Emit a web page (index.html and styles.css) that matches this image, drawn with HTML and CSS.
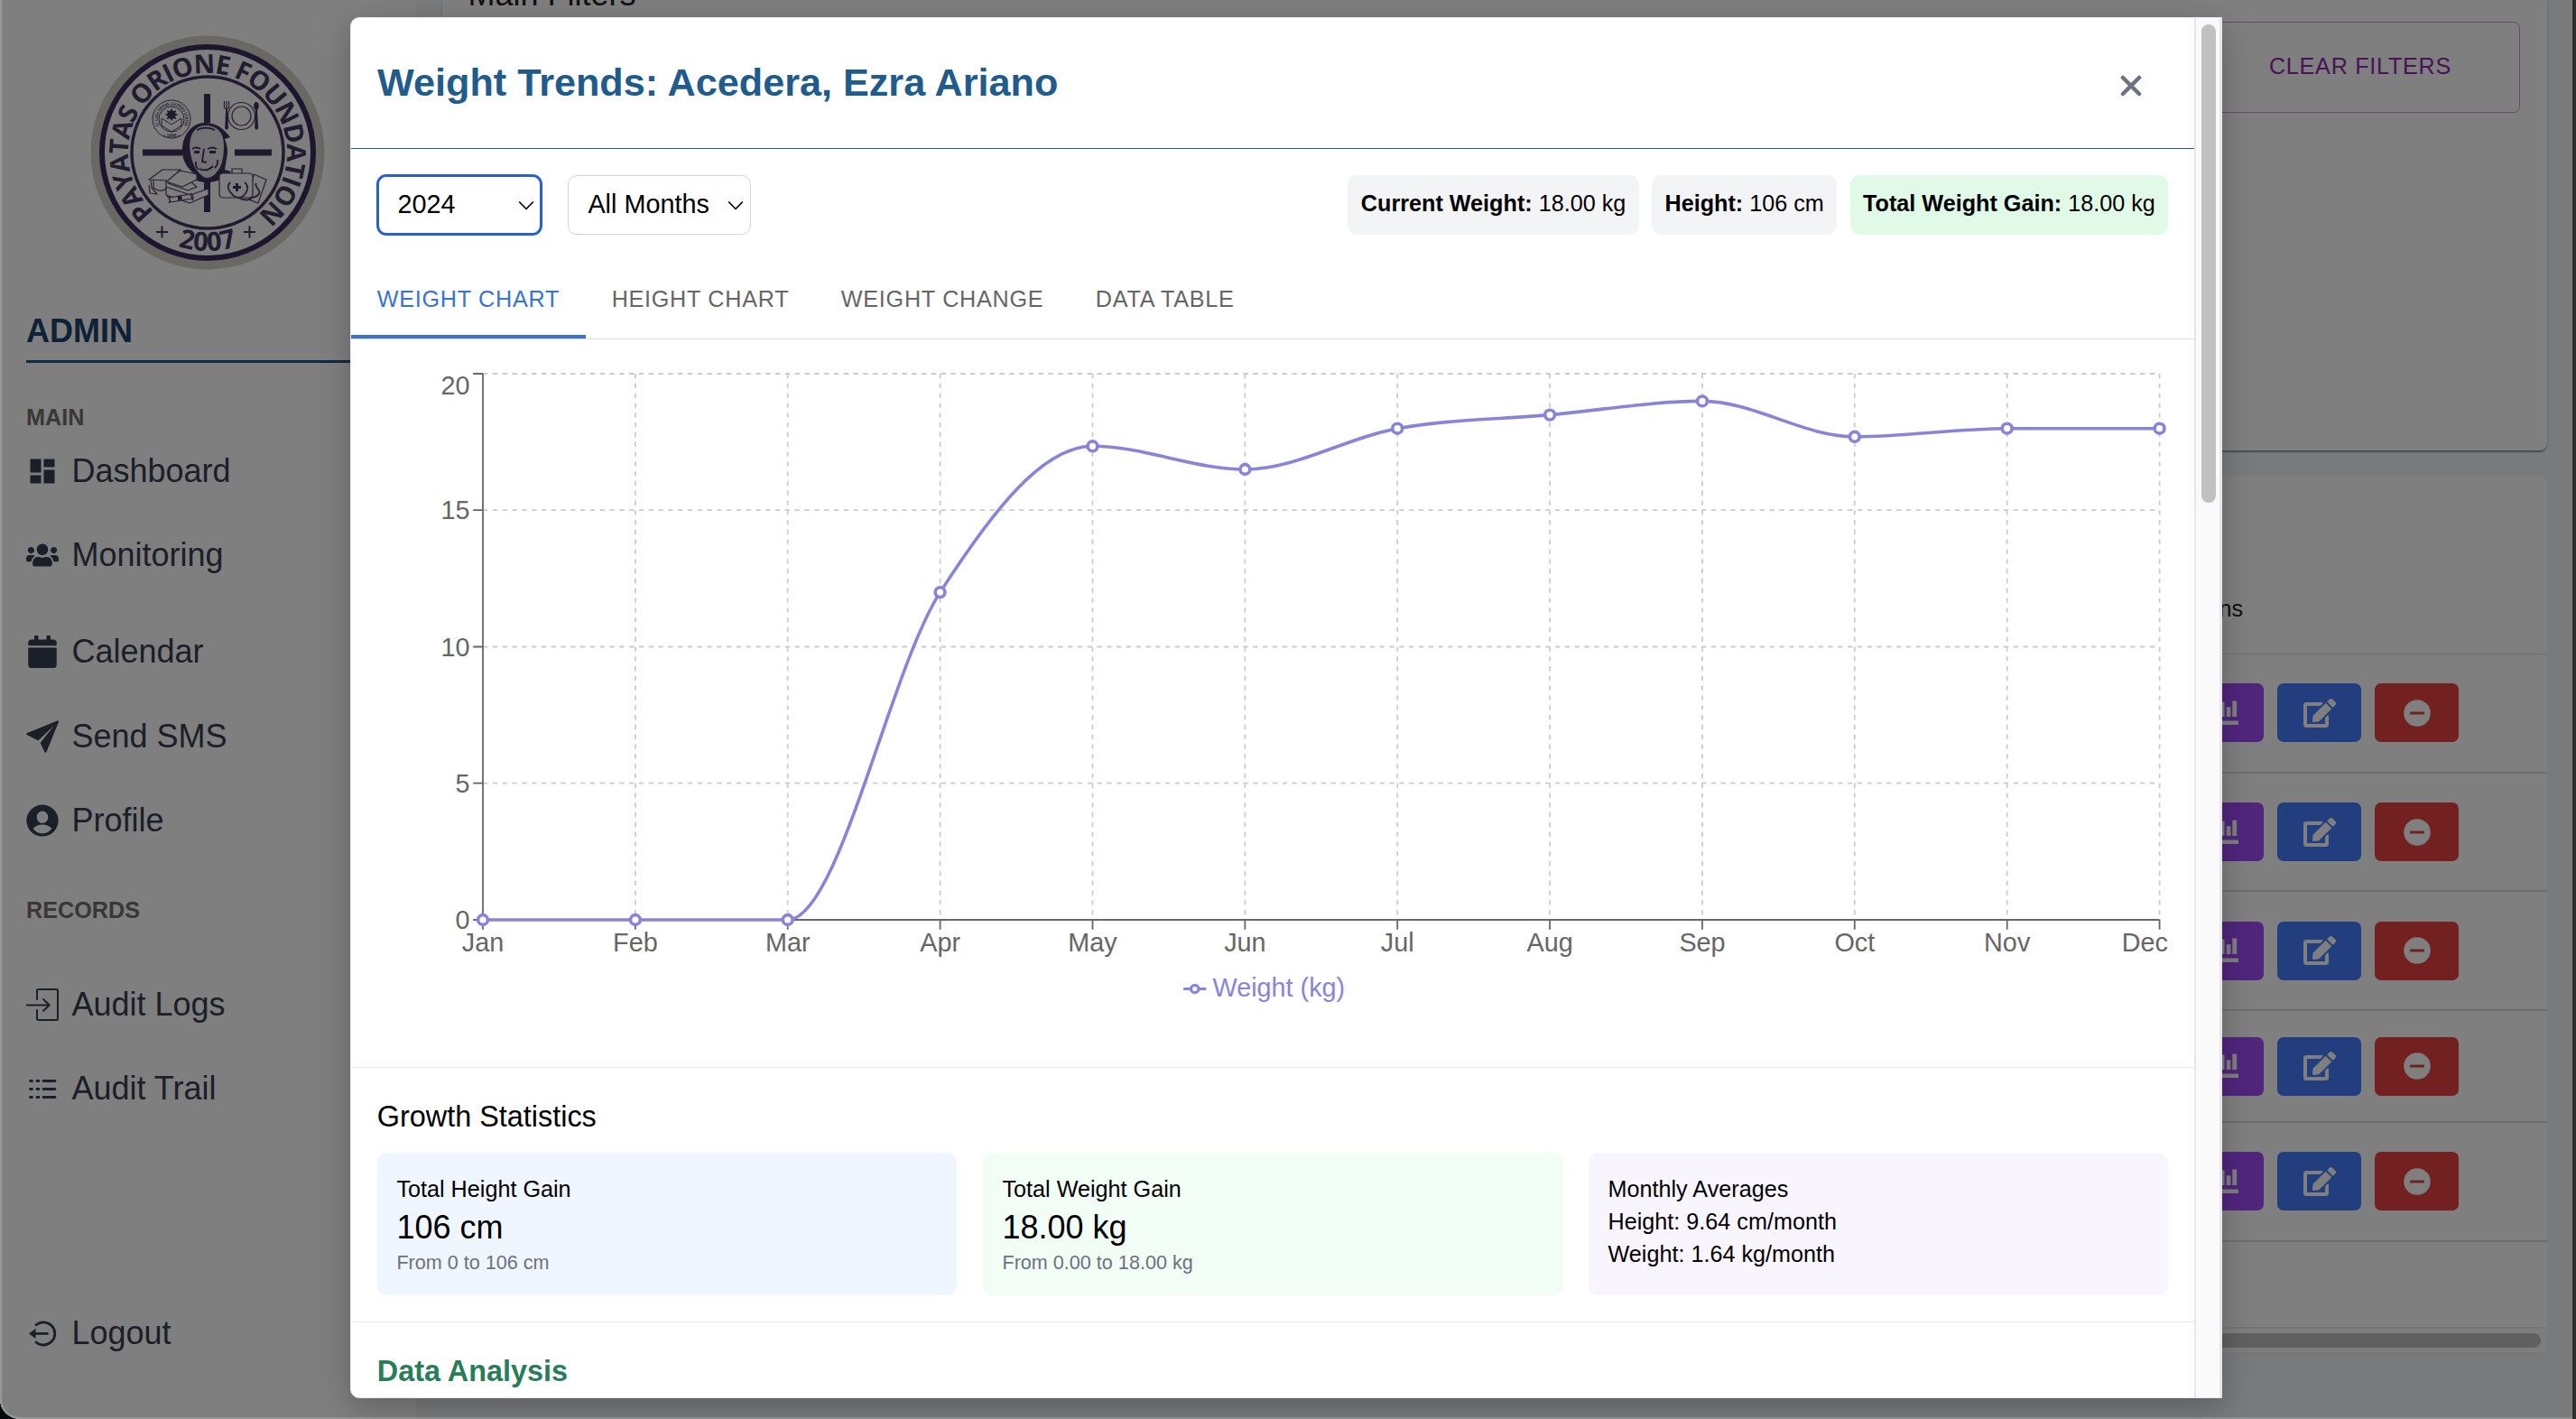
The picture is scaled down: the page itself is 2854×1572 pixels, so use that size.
FILE: index.html
```html
<!DOCTYPE html>
<html lang="en">
<head>
<meta charset="utf-8">
<title>Weight Trends</title>
<link rel="stylesheet" href="styles.css">
</head>
<body>
<svg class="defs" width="0" height="0" aria-hidden="true">
  <symbol id="i-chart" viewBox="0 0 36 36"><path d="M.5 26.500h34.500a1.500 1.500 0 0 1 1.500 1.500v1.500a1.500 1.500 0 0 1-1.500 1.500H.5zM3 9h4.500v13H3zM9.500 14H14v8H9.500zM16.200 5.500h4.300V22h-4.300zM22.800 11.300h4.600V22h-4.600zM29.300 4.500h4.900V22h-4.900z"/></symbol>
  <symbol id="i-edit" viewBox="0 0 576 512"><path d="M402.600 83.200l90.200 90.200c3.800 3.800 3.800 10 0 13.800L274.400 405.600l-92.800 10.300c-12.400 1.400-22.900-9.100-21.500-21.500l10.300-92.800L388.800 83.200c3.800-3.800 10-3.800 13.800 0zm162-22.900l-48.800-48.800c-15.200-15.200-39.900-15.200-55.200 0l-35.400 35.400c-3.800 3.800-3.800 10 0 13.800l90.200 90.200c3.800 3.800 10 3.800 13.800 0l35.400-35.400c15.200-15.300 15.200-40 0-55.200zM384 346.200V448H64V128h229.800c3.200 0 6.200-1.300 8.500-3.500l40-40c7.600-7.600 2.200-20.500-8.500-20.500H48C21.500 64 0 85.500 0 112v352c0 26.500 21.500 48 48 48h352c26.500 0 48-21.500 48-48V306.200c0-10.700-12.900-16-20.500-8.500l-40 40c-2.200 2.300-3.500 5.300-3.500 8.500z"/></symbol>
  <symbol id="i-minus" viewBox="0 0 36 36"><path fill-rule="evenodd" d="M18 3.200a14.800 14.800 0 1 0 0 29.600a14.800 14.800 0 0 0 0-29.600zM10.500 16.400h15a.5.5 0 0 1 .5.5v2.200a.5.5 0 0 1-.5.5h-15a.5.5 0 0 1-.5-.5v-2.200a.5.5 0 0 1 .5-.5z"/></symbol>
</svg>

<div class="window">
  <aside class="sidebar">
    <svg class="logo" viewBox="0 0 260 260">
      <defs>
        <path id="arc-top" d="M71.100 195.400A88 88 0 1 1 188.900 195.400"/>
        <path id="arc-bottom" d="M21 130A109 109 0 0 0 239 130"/>
        <path id="arc-seal" d="M76.500 100.200A15.300 15.300 0 1 1 103.500 100.200"/>
      </defs>
      <circle cx="130" cy="130" r="129.500" fill="#d2d0c4"/>
      <circle cx="130" cy="130" r="117" fill="#fcfcfc" stroke="#3b2c5c" stroke-width="6"/>
      <circle cx="130" cy="130" r="84" fill="none" stroke="#43375f" stroke-width="3.500"/>
      <g class="logo-text">
        <text font-size="29"><textPath href="#arc-top" textLength="428" lengthAdjust="spacing">PAYATAS ORIONE FOUNDATION</textPath></text>
        <text font-size="29" text-anchor="middle"><textPath href="#arc-bottom" startOffset="50%">2007</textPath></text>
      </g>
      <g fill="#3f335c">
        <path d="M126 65h7v32h-7zM126 160h7v36h-7zM58 126.500h44v7H58zM160 126.500h41v7h-41z"/>
        <path d="M73 217h13v2H73zM78.500 211.500h2v13h-2zM170 217h13v2h-13zM175.500 211.500h2v13h-2z"/>
      </g>
      <!-- learning center seal -->
      <g fill="none" stroke="#4a4064" stroke-width="1">
        <circle cx="90" cy="93" r="21"/><circle cx="90" cy="93" r="14"/>
        <path d="M79 92l11 7 11-7v8l-11 7-11-7z"/>
      </g>
      <text class="seal-text" font-size="5"><textPath href="#arc-seal" textLength="62" lengthAdjust="spacingAndGlyphs">ST. LUIGI ORIONE LEARNING CENTER</textPath></text>
      <text class="seal-text" x="90" y="112.500" font-size="5" text-anchor="middle">• 1996 •</text>
      <path fill="#3f335c" d="M90 81l1.700 3.300 3.600-1.400-1.300 3.500 3.300 1.700-3.300 1.600 1.300 3.600-3.600-1.300-1.700 3.300-1.700-3.300-3.600 1.300 1.300-3.600-3.300-1.600 3.300-1.700-1.300-3.500 3.600 1.400z"/>
      <!-- plate and cutlery -->
      <g fill="none" stroke="#4a4064" stroke-width="1.200">
        <circle cx="167.500" cy="89.500" r="15"/><circle cx="167.500" cy="89.500" r="10.500"/>
        <path d="M148.500 73v8M151 73v8M153.500 73v8M148.500 81h5"/>
      </g>
      <path fill="#3f335c" d="M150.200 81h1.800l1 22q-2 3-3.800 0zM184 74c3 0 4 6 1 9l1.200 20q-2 3-4 0L183 83c-3-3-2-9 1-9z"/>
      <!-- portrait -->
      <path fill="#3f335c" d="M127 97c10 0 18 3 28 16l-6 2c3 8 4 14 2 22l-2 12 7 2c-7 8-16 12-27 12-9 0-13-3-17-6l4-3c-9-7-15-16-14-29 1-15 11-28 25-28z"/>
      <path fill="#e4e2e8" d="M130 100c11 1 18 8 18 22 0 9-1 18-4 24-4 7-9 12-14 12-6 0-13-8-16-16-3-9-5-18-3-27 2-10 9-16 19-15z"/>
      <path fill="none" stroke="#3f335c" stroke-width="1.800" d="M113 126q5-3 9 0M130 126q6-3 10 0M126 126l-2 14 5 1M121 148q8 4 15-3M117 140q-1 5 3 9M141 138q1 5-3 9M118 105q10-5 20 0"/>
      <path fill="#3f335c" d="M115 128h6v3h-6zM132 128h7v3h-7z"/>
      <!-- graduation cap and books -->
      <g fill="#fcfcfc" stroke="#4a4064" stroke-width="1.200" stroke-linejoin="round">
        <path d="M84 168l27 9 20-7v7l-21 9-26-9z"/>
        <path d="M86 164l22-8 10 2-6 5 6 5-10 4z"/>
        <path d="M84 159l16-9 18 4 0 6-16 8-18-6z"/>
        <path d="M65 160l15-11h20l-14 12zM70 161v8q8 6 14 1v-8M67 161l1 8 6 7-8-1-1-9"/>
        <path d="M87 180l24-4 2 5-24 4zM85 178q5 3 2 8M111 175q5 3 2 8"/>
      </g>
      <path fill="#3f335c" d="M97 178l4 0 1 4-5 1z"/>
      <!-- medical bag -->
      <g fill="#fcfcfc" stroke="#4a4064" stroke-width="1.200">
        <path d="M181 154l14 6-9 26-10-4z"/>
        <rect x="143" y="153" width="37" height="27" rx="4"/>
        <path fill="none" d="M157 153v-5h11v5"/>
        <path fill="none" stroke-width="1.800" d="M155 163q-4 4-1 9 4 7 10 8 7 0 10-9 1-5-3-8M164 180q10 5 15 0 10-2 8-8-5-6-3-8"/>
      </g>
      <path fill="#3f335c" d="M161 164h3v3h3v3h-3v3h-3v-3h-3v-3h3z"/>
    </svg>

    <h2 class="role">ADMIN</h2>

    <h3 class="nav-head">MAIN</h3>
    <nav class="nav nav-main">
      <a class="nav-item"><svg viewBox="0 0 24 24"><path d="M3 13h8V3H3v10zm0 8h8v-6H3v6zm10 0h8V11h-8v10zm0-18v6h8V3h-8z"/></svg>Dashboard</a>
      <a class="nav-item"><svg viewBox="0 0 640 512"><path d="M96 224c35.300 0 64-28.700 64-64s-28.700-64-64-64-64 28.700-64 64 28.700 64 64 64zm448 0c35.300 0 64-28.700 64-64s-28.700-64-64-64-64 28.700-64 64 28.700 64 64 64zm32 32h-64c-17.600 0-33.500 7.100-45.100 18.600 40.300 22.100 68.900 62 75.100 109.400h66c17.700 0 32-14.300 32-32v-32c0-35.300-28.700-64-64-64zm-256 0c61.900 0 112-50.100 112-112S381.900 32 320 32 208 82.100 208 144s50.100 112 112 112zm76.800 32h-8.300c-20.800 10-43.900 16-68.500 16s-47.600-6-68.500-16h-8.300C179.600 288 128 339.600 128 403.200V432c0 26.500 21.500 48 48 48h288c26.500 0 48-21.500 48-48v-28.800c0-63.600-51.600-115.200-115.200-115.200zm-223.700-13.400C161.500 263.100 145.600 256 128 256H64c-35.300 0-64 28.700-64 64v32c0 17.700 14.300 32 32 32h65.900c6.300-47.400 34.900-87.300 75.200-109.400z"/></svg>Monitoring</a>
      <a class="nav-item nav-item-spaced"><svg viewBox="0 0 448 512"><path d="M12 192h424c6.600 0 12 5.400 12 12v260c0 26.500-21.500 48-48 48H48c-26.500 0-48-21.500-48-48V204c0-6.600 5.400-12 12-12zm436-44v-36c0-26.500-21.500-48-48-48h-48V12c0-6.600-5.400-12-12-12h-40c-6.600 0-12 5.400-12 12v52H160V12c0-6.600-5.400-12-12-12h-40c-6.600 0-12 5.400-12 12v52H48C21.500 64 0 85.500 0 112v36c0 6.600 5.400 12 12 12h424c6.600 0 12-5.400 12-12z"/></svg>Calendar</a>
      <a class="nav-item"><svg viewBox="0 0 36 36"><path d="M.6 14.200L34.400.4Q36.500-.2 35.900 1.900L22.500 35Q21.600 36.600 20.600 35.200L15.600 25 31.800 4.800 32.800 4 13.300 22.500.6 15.900Q-.6 15 .6 14.200z"/></svg>Send SMS</a>
      <a class="nav-item"><svg viewBox="0 0 36 36"><path fill-rule="evenodd" d="M18 .6a17.600 17.400 0 1 0 0 34.900a17.600 17.400 0 0 0 0-34.900zM18 7.500a6.300 6.700 0 1 1 0 13.400a6.300 6.700 0 0 1 0-13.400zM7.600 26.800Q12 22.400 18 22.400T28.400 26.800Q24.500 32.300 18 32.300T7.600 26.800z"/></svg>Profile</a>
    </nav>

    <h3 class="nav-head nav-head-records">RECORDS</h3>
    <nav class="nav nav-records">
      <a class="nav-item"><svg viewBox="0 0 36 36"><path class="line" d="M12 12V2.500Q12 1 13.500 1h20Q35 1 35 2.500v31Q35 35 33.500 35h-20Q12 35 12 33.500V24M.8 18.400H25.500M19 12l6.800 6.400L19 24.800"/></svg>Audit Logs</a>
      <a class="nav-item"><svg viewBox="0 0 36 36"><path class="line thick" d="M4.500 9.500h2M12 9.500h2M19 9.500h13M4.500 18.500h2M12 18.500h2M19 18.500h13M4.500 27.500h2M12 27.500h2M19 27.500h13"/></svg>Audit Trail</a>
    </nav>
    <a class="nav-item nav-logout"><svg viewBox="0 0 36 36"><path class="line thick" d="M11 8.800A12.600 12.600 0 1 1 11 28M23.500 18.400H8"/><path d="M3 18.400l7.500-5.600v11.200z"/></svg>Logout</a>
  </aside>

  <main class="main">
    <section class="card filters">
      <h1 class="filters-title">Main Filters</h1>
      <button class="clear-btn">CLEAR FILTERS</button>
    </section>
    <section class="card table">
      <div class="table-head"><span>Actions</span></div>
      <div class="table-row"><span class="act chart"><svg><use href="#i-chart"/></svg></span><span class="act edit"><svg><use href="#i-edit"/></svg></span><span class="act remove"><svg><use href="#i-minus"/></svg></span></div>
      <div class="table-row"><span class="act chart"><svg><use href="#i-chart"/></svg></span><span class="act edit"><svg><use href="#i-edit"/></svg></span><span class="act remove"><svg><use href="#i-minus"/></svg></span></div>
      <div class="table-row"><span class="act chart"><svg><use href="#i-chart"/></svg></span><span class="act edit"><svg><use href="#i-edit"/></svg></span><span class="act remove"><svg><use href="#i-minus"/></svg></span></div>
      <div class="table-row short"><span class="act chart"><svg><use href="#i-chart"/></svg></span><span class="act edit"><svg><use href="#i-edit"/></svg></span><span class="act remove"><svg><use href="#i-minus"/></svg></span></div>
      <div class="table-row"><span class="act chart"><svg><use href="#i-chart"/></svg></span><span class="act edit"><svg><use href="#i-edit"/></svg></span><span class="act remove"><svg><use href="#i-minus"/></svg></span></div>
      <div class="table-foot"></div>
      <div class="hscroll"><div class="hscroll-thumb"></div></div>
    </section>
  </main>

  <div class="overlay">
    <div class="modal">
      <div class="modal-body">
        <header class="modal-head">
          <h2>Weight Trends: Acedera, Ezra Ariano</h2>
          <svg class="close" viewBox="0 0 24 24"><path d="M3 3l18 18M21 3L3 21"/></svg>
        </header>
        <div class="controls">
          <div class="select focused">2024<svg viewBox="0 0 18 12"><path d="M1.200 1.500L9 9.500l7.800-8"/></svg></div>
          <div class="select">All Months<svg viewBox="0 0 18 12"><path d="M1.200 1.500L9 9.500l7.800-8"/></svg></div>
          <div class="chips">
            <div class="chip"><b>Current Weight:</b> 18.00 kg</div>
            <div class="chip"><b>Height:</b> 106 cm</div>
            <div class="chip gain"><b>Total Weight Gain:</b> 18.00 kg</div>
          </div>
        </div>
        <div class="tabs">
          <div class="tab active">WEIGHT CHART</div>
          <div class="tab">HEIGHT CHART</div>
          <div class="tab">WEIGHT CHANGE</div>
          <div class="tab">DATA TABLE</div>
        </div>
        <div class="chart-wrap">
          <svg class="plot" viewBox="389 376 2042 806">
            <g class="grid">
              <path d="M535 414H2392.600M535 565.200H2392.600M535 716.500H2392.600M535 867.700H2392.600M535 1019H2392.600"/>
              <path d="M703.900 414V1019M872.700 414V1019M1041.600 414V1019M1210.500 414V1019M1379.400 414V1019M1548.200 414V1019M1717.100 414V1019M1886 414V1019M2054.800 414V1019M2223.700 414V1019M2392.600 414V1019"/>
            </g>
            <g class="axis">
              <path d="M535 414V1019M535 1019H2392.600"/>
              <path d="M524.200 414H535M524.200 565.200H535M524.200 716.500H535M524.200 867.700H535M524.200 1019H535"/>
              <path d="M535 1019v10.800M703.900 1019v10.800M872.700 1019v10.800M1041.600 1019v10.800M1210.500 1019v10.800M1379.400 1019v10.800M1548.200 1019v10.800M1717.100 1019v10.800M1886 1019v10.800M2054.800 1019v10.800M2223.700 1019v10.800M2392.600 1019v10.800"/>
            </g>
            <g class="labels" text-anchor="end">
              <text x="520.500" y="436.700">20</text><text x="520.500" y="575.400">15</text><text x="520.500" y="726.700">10</text><text x="520.500" y="878">5</text><text x="520.500" y="1029">0</text>
            </g>
            <g class="labels" text-anchor="middle">
              <text x="535" y="1053.700">Jan</text><text x="703.900" y="1053.700">Feb</text><text x="872.700" y="1053.700">Mar</text><text x="1041.600" y="1053.700">Apr</text><text x="1210.500" y="1053.700">May</text><text x="1379.400" y="1053.700">Jun</text><text x="1548.200" y="1053.700">Jul</text><text x="1717.100" y="1053.700">Aug</text><text x="1886" y="1053.700">Sep</text><text x="2054.800" y="1053.700">Oct</text><text x="2223.700" y="1053.700">Nov</text><text x="2376.400" y="1053.700">Dec</text>
            </g>
            <path class="series" d="M535 1019L872.700 1019C929 1019 985.300 743.500 1041.600 656.100C1097.900 568.700 1154.200 494.300 1210.500 494.300C1266.800 494.300 1323.100 520 1379.400 520C1435.700 520 1491.900 484.800 1548.200 474.700C1604.500 464.600 1660.800 464.600 1717.100 459.600C1773.400 454.600 1829.700 444.400 1886 444.400C1942.300 444.400 1998.500 483.800 2054.800 483.800C2111.100 483.800 2167.400 474.700 2223.700 474.700L2392.600 474.700"/>
            <g class="dots">
              <circle cx="535" cy="1019" r="5.400"/><circle cx="703.900" cy="1019" r="5.400"/><circle cx="872.700" cy="1019" r="5.400"/><circle cx="1041.600" cy="656.100" r="5.400"/><circle cx="1210.500" cy="494.300" r="5.400"/><circle cx="1379.400" cy="520" r="5.400"/><circle cx="1548.200" cy="474.700" r="5.400"/><circle cx="1717.100" cy="459.600" r="5.400"/><circle cx="1886" cy="444.400" r="5.400"/><circle cx="2054.800" cy="483.800" r="5.400"/><circle cx="2223.700" cy="474.700" r="5.400"/><circle cx="2392.600" cy="474.700" r="5.400"/>
            </g>
            <g class="legend">
              <path d="M1311.200 1095.500h8.400M1328 1095.500h8.400"/><circle cx="1323.800" cy="1095.500" r="4.200"/>
              <text x="1343.500" y="1103.500">Weight (kg)</text>
            </g>
          </svg>
        </div>
        <section class="stats">
          <h3>Growth Statistics</h3>
          <div class="stat-grid">
            <div class="stat blue"><p>Total Height Gain</p><p class="big">106 cm</p><p class="note">From 0 to 106 cm</p></div>
            <div class="stat green"><p>Total Weight Gain</p><p class="big">18.00 kg</p><p class="note">From 0.00 to 18.00 kg</p></div>
            <div class="stat purple"><p>Monthly Averages</p><p>Height: 9.64 cm/month</p><p>Weight: 1.64 kg/month</p></div>
          </div>
        </section>
        <section class="analysis"><h3>Data Analysis</h3></section>
      </div>
      <div class="vscroll"><div class="vscroll-thumb"></div></div>
    </div>
  </div>
  <div class="frame"></div>
</div>
</body>
</html>
```

FILE: styles.css
```css
* { box-sizing: border-box; }
body {
  margin: 0;
  width: 2854px;
  height: 1572px;
  overflow: hidden;
  background: linear-gradient(90deg, #050a0a 2000px, #2f2f2f 2000px);
  font-family: "Liberation Sans", Arial, sans-serif;
  color: #000;
}
h1, h2, h3, p { margin: 0; font-weight: 400; }
.defs { position: absolute; }

.window {
  position: relative;
  display: flex;
  width: 2850px;
  height: 1572px;
  overflow: hidden;
  border-radius: 0 0 0 22px;
  background: #f3f4f6;
}
.frame {
  position: absolute;
  inset: -4px 0 0 0;
  border: 2px solid rgba(255, 255, 255, .18);
  border-right: 0;
  border-radius: 0 0 0 22px;
}

/* Sidebar */
.sidebar {
  flex: none;
  display: flex;
  flex-direction: column;
  width: 461px;
  padding: 39px 29px 0;
  background: #fff;
  color: #374151;
}
.logo { flex: none; width: 260px; height: 260px; margin-left: 71px; }
.logo-text { font-family: "Open Sans", "Noto Sans", sans-serif; font-weight: 700; fill: #43385f; }
.seal-text { fill: #4a4064; font-weight: 700; }
.role {
  height: 67px;
  margin-top: 36px;
  margin-bottom: 34px;
  padding-top: 12px;
  border-bottom: 3px solid #1f5787;
  color: #1a456c;
  font-size: 36px;
  font-weight: 700;
  line-height: 40px;
}
.nav-head { height: 36px; margin-top: 8px; color: #707070; font-size: 25.2px; font-weight: 700; line-height: 36px; }
.nav { display: flex; flex-direction: column; }
.nav-main { margin-top: -5px; }
.nav-head-records { margin-top: 34px; }
.nav-records { margin-top: 40px; }
.nav-item { flex: none; display: flex; align-items: center; gap: 14.400px; height: 93.500px; font-size: 36px; line-height: 40px; }
.nav-item-spaced { margin-top: 13.500px; }
.nav-logout { margin-top: 177px; }
.nav-item svg { width: 36px; height: 36px; fill: currentColor; overflow: visible; }
.nav-item .line { fill: none; stroke: currentColor; stroke-width: 2; stroke-linecap: round; stroke-linejoin: round; }
.nav-item .thick { stroke-width: 2.800; }

/* Page behind the dialog */
.main { flex: 1; display: flex; flex-direction: column; padding: 0 28px 0 28.500px; }
.card { background: #fff; }
.filters {
  display: flex;
  flex: none;
  justify-content: space-between;
  align-items: flex-start;
  height: 499px;
  padding: 0 30px 0 29px;
  border-radius: 0 0 8px 8px;
  box-shadow: 0 3px 2px -1px rgba(0,0,0,.3), 0 1px 2px rgba(0,0,0,.25);
}
.filters-title { margin-top: -24px; font-size: 36px; line-height: 36px; color: #222; }
.clear-btn {
  width: 400px;
  height: 101px;
  margin-top: 24px;
  padding: 0 75px 3px 0;
  border: 1.500px solid rgba(156, 39, 176, .5);
  border-radius: 7.200px;
  background: none;
  color: #9226b0;
  font: 25.200px "Liberation Sans", Arial, sans-serif;
  letter-spacing: .72px;
  text-align: right;
}
.table { display: flex; flex-direction: column; margin-top: 29px; height: 972px; border-radius: 8px 8px 0 0; border-bottom: 2px solid #eee; }
.table-head { flex: none; height: 197px; padding: 131px 337px 0 0; border-bottom: 1px solid #dcdcdc; text-align: right; font-size: 25.200px; line-height: 30px; color: #222; }
.table-row { flex: none; display: flex; justify-content: flex-end; align-items: center; gap: 15px; height: 131.700px; padding-right: 98px; border-bottom: 2px solid #dcdcdc; }
.table-row.short { height: 124px; }
.act { display: flex; align-items: center; justify-content: center; width: 93px; height: 65px; border-radius: 7px; }
.act svg { width: 36px; height: 36px; fill: #fff; }
.act.edit svg { height: 32px; }
.act.chart { background: #a04bf8; }
.act.edit { background: #447dfd; }
.act.remove { background: #e44040; }
.table-foot { flex: none; height: 96px; border-bottom: 2px solid #ececec; }
.hscroll { flex: 1; display: flex; align-items: center; padding: 0 7px; background: #fafafa; }
.hscroll-thumb { width: 100%; height: 16px; border-radius: 8px; background: #c1c1c1; }

/* Dialog */
.overlay { position: absolute; inset: 0; padding: 19px 0 0 388px; background: rgba(0, 0, 0, .5); }
.modal {
  display: flex;
  width: 2074px;
  height: 1530px;
  overflow: hidden;
  border: 1px solid #e5e7eb;
  border-radius: 10px 0 0 10px;
  background: #fff;
  box-shadow: 0 10px 34px rgba(0, 0, 0, .24);
}
.modal-body { flex: 1; display: flex; flex-direction: column; min-width: 0; }
.modal-head { flex: none; display: flex; justify-content: space-between; height: 145px; padding: 45px 58px 0 29px; border-bottom: 1px solid #1f5b8b; }
.modal-head h2 { color: #1f5b8b; font-size: 43.200px; font-weight: 700; line-height: 52px; }
.close { width: 24px; height: 24px; margin-top: 17.500px; fill: none; stroke: #6b7280; stroke-width: 4.500; stroke-linecap: round; }
.controls { flex: none; display: flex; height: 124px; padding: 29px 28.800px; }
.select { display: flex; align-items: center; justify-content: space-between; width: 203px; padding: 0 6.500px 1px 21.600px; margin-right: 29px; border: 1px solid #d1d5db; border-radius: 10px; font-size: 28.800px; }
.select.focused { width: 182px; outline: 3px solid #2a60ce; outline-offset: -2px; border-color: transparent; }
.select svg { width: 18px; height: 12px; margin-top: 3px; fill: none; stroke: #000; stroke-width: 1.700; stroke-linejoin: round; }
.chips { flex: 1; display: flex; justify-content: flex-end; gap: 14.400px; font-size: 25.200px; }
.chip { padding: 0 14.400px; border-radius: 10.800px; background: #f3f4f6; line-height: 63px; white-space: pre; }
.chip.gain { background: #e0fae7; }
.tabs { flex: none; display: flex; height: 87px; border-bottom: 1px solid #dadde1; color: #666; font-size: 25.200px; letter-spacing: .72px; }
.tab { height: 86px; padding: 26px 28.800px 0; line-height: 32px; }
.tab.active { color: #3873d0; border-bottom: 4px solid #3873d0; }
.chart-wrap { flex: none; height: 807px; border-bottom: 1px solid #e5e7eb; }
.plot { display: block; width: 2042px; height: 806px; }
.grid path { fill: none; stroke: #ccc; stroke-width: 1.800; stroke-dasharray: 5.400 5.400; }
.axis path { fill: none; stroke: #666; stroke-width: 1.800; }
.labels text { font-size: 28.800px; fill: #666; }
.series, .legend path { fill: none; stroke: #8884d8; stroke-width: 3.600; }
.dots circle, .legend circle { fill: #fff; stroke: #8884d8; stroke-width: 3.600; }
.legend path, .legend circle { stroke-width: 3.200; }
.legend text { font-size: 28.800px; fill: #8884d8; }
.stats { flex: none; height: 282px; padding: 29px 28.800px 0; border-bottom: 1px solid #e5e7eb; }
.stats h3 { height: 65px; font-size: 32.400px; line-height: 50px; }
.stat-grid { display: grid; grid-template-columns: repeat(3, 1fr); gap: 28.800px; }
.stat { height: 158px; padding: 21.600px; border-radius: 10.800px; font-size: 25.200px; line-height: 36px; }
.stat.blue { background: #eff6ff; }
.stat.green { background: #f2fdf5; }
.stat.purple { background: #f8f5ff; }
.stat .big { font-size: 36px; line-height: 50.400px; }
.stat .note { color: #6b7280; font-size: 21.600px; line-height: 28.800px; }
.analysis { padding: 29px 28.800px 0; }
.analysis h3 { color: #2a7d5a; font-size: 32.400px; font-weight: 700; line-height: 50px; }
.vscroll { flex: none; width: 30px; padding: 7px 5px 0 6px; border: 2px solid #e8e8e8; border-width: 0 2px; background: #fafafa; }
.vscroll-thumb { width: 16px; height: 530px; border-radius: 8px; background: #c1c1c1; }
```
